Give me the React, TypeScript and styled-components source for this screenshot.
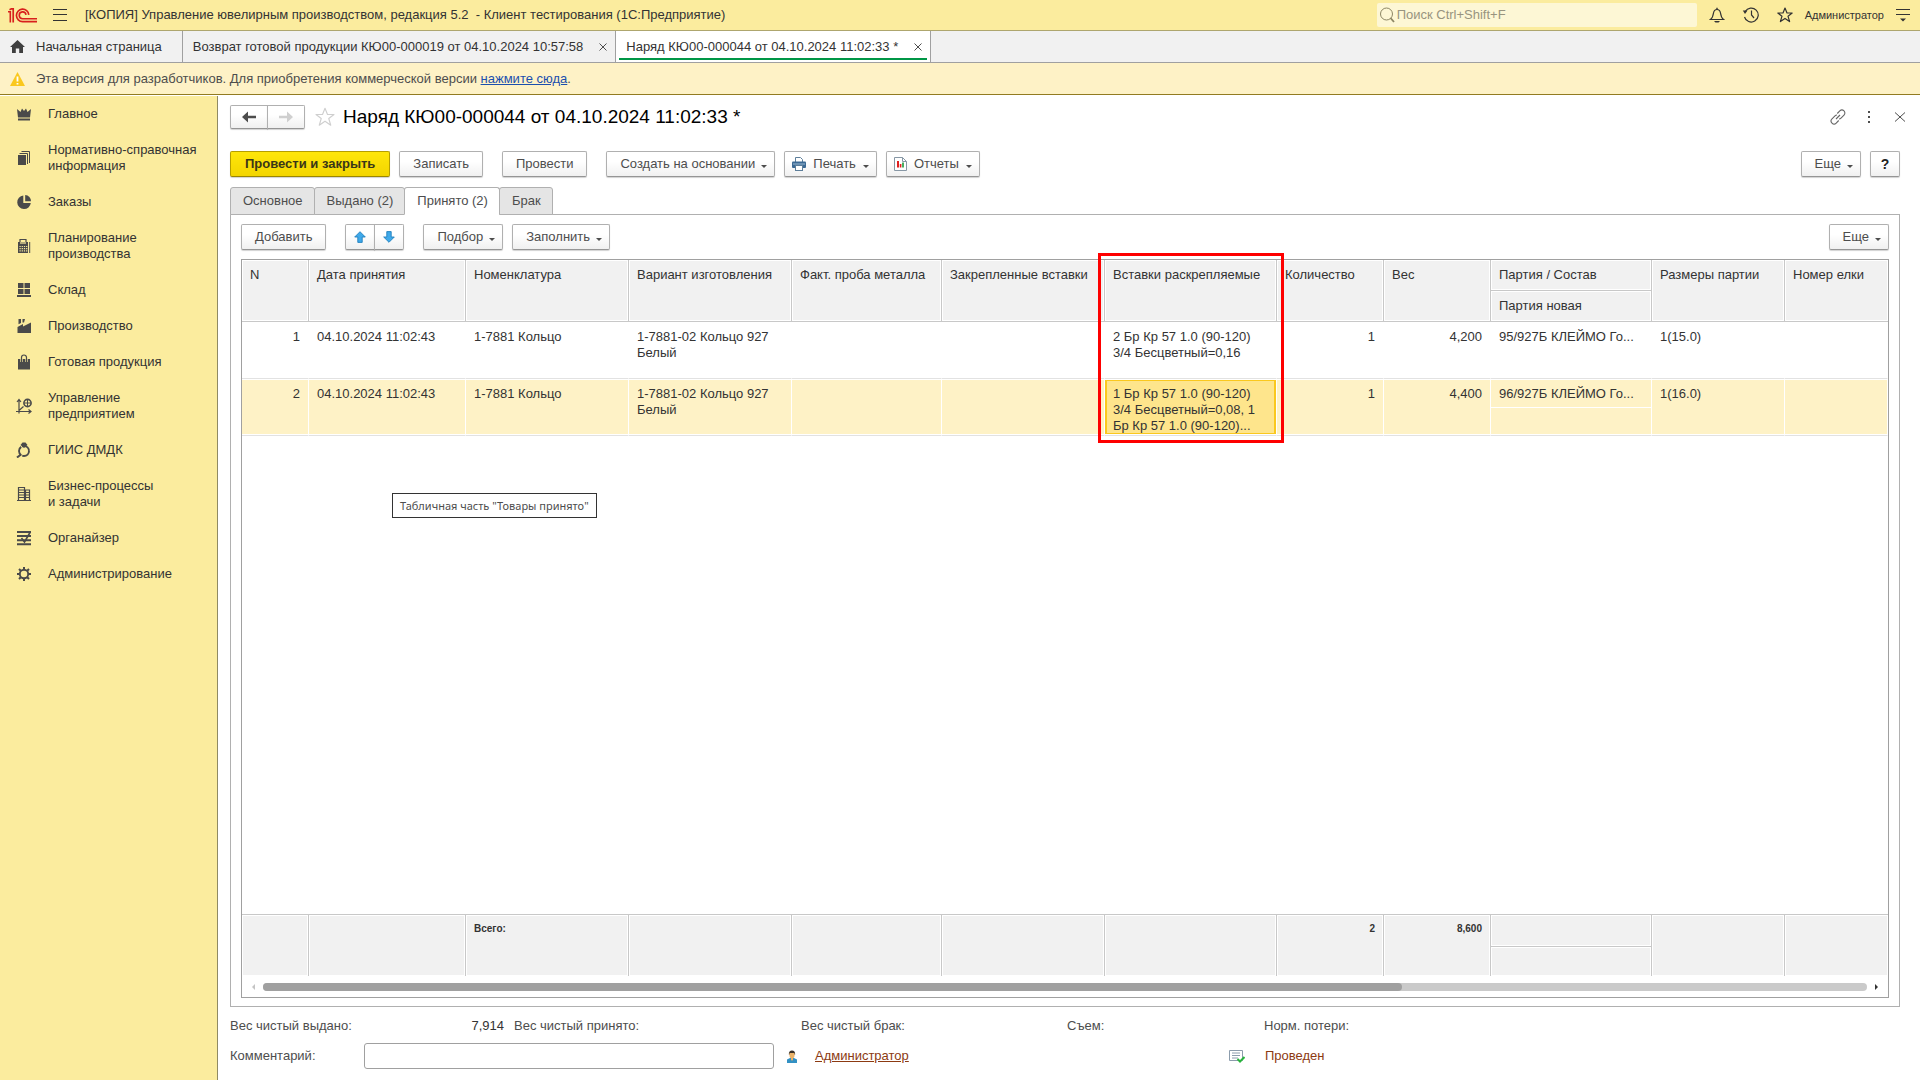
import React from "react";
import styled, { createGlobalStyle, css } from "styled-components";

const Global = createGlobalStyle`
  *, *::before, *::after { box-sizing: border-box; }
  html, body { margin: 0; padding: 0; }
  body, button, input, table {
    font-family: "Liberation Sans", Arial, sans-serif;
    font-size: 13px;
    line-height: 16px;
    color: #333;
  }
  button { padding: 0; margin: 0; border: 0; background: none; cursor: pointer; }
  a { color: inherit; text-decoration: none; }
  svg { display: block; flex: none; }
`;

const Shell = styled.div`
  display: flex;
  flex-direction: column;
  height: 100vh;
  min-height: 640px;
  background: #fff;
`;

/* ---------- top bar ---------- */
const TopBar = styled.header`
  display: flex;
  align-items: center;
  height: 31px;
  flex: none;
  padding: 0 10px 0 8px;
  background: #fbec9e;
  border-bottom: 1px solid #aea66e;
`;
const MenuButton = styled.button`
  margin: 0 18px 0 16px;
`;
const AppTitle = styled.div`
  flex: 1;
  white-space: pre;
`;
const Search = styled.label`
  display: flex;
  align-items: center;
  gap: 2px;
  width: 320px;
  height: 24px;
  padding: 0 2px;
  margin-right: 12px;
  border-radius: 2px;
  background: #fdf7d5;
`;
const SearchInput = styled.input`
  flex: 1;
  min-width: 0;
  padding: 0;
  border: 0;
  outline: 0;
  background: transparent;
  &::placeholder { color: #98947f; opacity: 1; }
`;
const TopIcons = styled.div`
  display: flex;
  align-items: center;
  gap: 17px;
`;
const UserName = styled.button`
  margin: 0 12px;
  font-size: 11px;
`;

/* ---------- window tabs ---------- */
const WindowTabs = styled.nav`
  display: flex;
  height: 32px;
  flex: none;
  background: #f1f1f1;
  border-bottom: 1px solid #a0a0a0;
`;
const WindowTab = styled.div<{ $active?: boolean }>`
  display: flex;
  align-items: center;
  gap: 16px;
  padding: 0 8px 0 10px;
  border-right: 1px solid #a0a0a0;
  background: ${(p) => (p.$active ? "#fff" : "transparent")};
  ${(p) =>
    p.$active &&
    css`
      background: linear-gradient(#009646, #009646) 50% 27px / calc(100% - 6px) 2px no-repeat #fff;
    `}
`;
const HomeTab = styled(WindowTab)`
  gap: 11px;
  padding: 0 20px 0 10px;
`;

/* ---------- notice ---------- */
const Notice = styled.div`
  display: flex;
  align-items: center;
  gap: 11px;
  height: 32px;
  flex: none;
  padding: 0 10px;
  margin-bottom: 1px;
  color: #4d4d4d;
  background: #fef2c6;
  border-bottom: 1px solid #927b21;
`;
const NoticeLink = styled.a`
  color: #1b4fae;
  text-decoration: underline;
`;

/* ---------- body ---------- */
const Body = styled.div`
  display: flex;
  flex: 1;
  min-height: 0;
`;
const Sidebar = styled.nav`
  width: 218px;
  flex: none;
  background: #fbec9e;
  border-right: 1px solid #8f8a63;
`;
const SideItem = styled.a`
  display: flex;
  align-items: center;
  gap: 15px;
  padding: 10px 8px 10px 15px;
  white-space: pre-line;
`;
const Main = styled.main`
  display: flex;
  flex-direction: column;
  flex: 1;
  min-width: 0;
  padding: 9px 20px 11px 12px;
`;
const TitleRow = styled.div`
  display: flex;
  align-items: center;
  height: 24px;
`;
const Title = styled.h1`
  flex: 1;
  margin: 0 0 0 8px;
  font-size: 19px;
  line-height: 24px;
  font-weight: 400;
  color: #000;
`;
const WindowIcons = styled.div`
  display: flex;
  align-items: center;
  gap: 16px;
  margin-right: -8px;
`;

const Button = styled.button<{ $primary?: boolean; $menu?: boolean }>`
  display: inline-flex;
  align-items: center;
  justify-content: center;
  gap: 6px;
  height: 26px;
  padding: 0 ${(p) => (p.$menu ? "7px" : "13px")} 0 13px;
  color: #4d4d4d;
  white-space: nowrap;
  border: 1px solid #b0b0b0;
  border-bottom-color: #959595;
  border-radius: 2px;
  background: linear-gradient(#fff 40%, #f0f0f0);
  box-shadow: 0 1px 1px rgba(0, 0, 0, 0.18);
  ${(p) =>
    p.$primary &&
    css`
      padding: 0 14px;
      color: #3a3618;
      font-weight: 700;
      background: linear-gradient(#ffe60a, #f3d500);
      border-color: #b59e00;
      border-bottom-color: #9a8600;
    `}
`;
const IconMenuButton = styled(Button)`
  gap: 7px;
  padding-left: 7px;
`;
const SquareButton = styled(Button)`
  width: 30px;
  padding: 0;
  font-size: 14px;
  font-weight: 700;
  color: #222;
`;
const Pair = styled.div`
  display: flex;
`;
const PairButton = styled(Button)<{ $wide?: boolean }>`
  width: ${(p) => (p.$wide ? "38px" : "30px")};
  height: ${(p) => (p.$wide ? "24px" : "26px")};
  padding: 0;
  &:first-child { border-radius: 2px 0 0 2px; }
  &:last-child { border-radius: 0 2px 2px 0; margin-left: -1px; }
`;
const NavPair = styled(Pair)`
  margin-right: 10px;
`;
const CommandBar = styled.div`
  display: flex;
  gap: 9px;
  margin: 22px 0 10px;
`;
const Gap = styled.span`
  width: 1px;
`;
const Spacer = styled.span`
  flex: 1;
`;

/* ---------- page tabs ---------- */
const PageTabs = styled.div`
  display: flex;
  height: 28px;
  margin-bottom: -1px;
`;
const PageTab = styled.button<{ $active?: boolean }>`
  position: relative;
  padding: 0 11px 0 12px;
  border: 1px solid #b0b0b0;
  border-radius: 3px 3px 0 0;
  color: #4d4d4d;
  background: #e5e5e5;
  & + & { margin-left: -1px; }
  ${(p) =>
    p.$active &&
    css`
      background: #fff;
      border-bottom-color: #fff;
    `}
`;
const Panel = styled.section`
  display: flex;
  flex-direction: column;
  flex: 1;
  min-height: 0;
  padding: 9px 10px 8px;
  border: 1px solid #b0b0b0;
`;
const TableBar = styled.div`
  display: flex;
  gap: 9px;
  margin-bottom: 9px;
`;

/* ---------- data table ---------- */
const TableFrame = styled.div`
  position: relative;
  display: flex;
  flex-direction: column;
  flex: 1;
  min-height: 0;
  border: 1px solid #a0a0a0;
`;
const TableArea = styled.div`
  flex: 1;
  min-height: 0;
`;
const Table = styled.table`
  width: 100%;
  height: 100%;
  table-layout: fixed;
  border-collapse: separate;
  border-spacing: 0;
`;
const HeadCell = styled.th`
  position: relative;
  height: 31px;
  padding: 7px 8px;
  text-align: left;
  vertical-align: top;
  font-weight: 400;
  white-space: nowrap;
  background: #f1f1f1;
  border-right: 1px solid #c8c8c8;
  border-bottom: 1px solid #c8c8c8;
  box-shadow: inset 0 0 0 1px #fff;
  &.last { border-right: 0; }
`;
const Frame = styled.span`
  position: absolute;
  z-index: 2;
  top: -7px;
  left: -7px;
  width: calc(100% + 15px);
  height: 190px;
  border: 3px solid #fe0000;
  pointer-events: none;
`;
const Row = styled.tr<{ $selected?: boolean }>`
  height: 57px;
  background: ${(p) => (p.$selected ? "#fef2c6" : "#fff")};
`;
const Cell = styled.td<{ $right?: boolean; $current?: boolean; $split?: boolean }>`
  padding: 7px 8px 0;
  vertical-align: top;
  text-align: ${(p) => (p.$right ? "right" : "left")};
  border-right: 1px solid #fff;
  border-bottom: 1px solid #e2e2e2;
  box-shadow: inset 0 1px 0 #fff, inset 0 -1px 0 #fff;
  overflow: hidden;
  ${(p) =>
    p.$split &&
    css`
      background: linear-gradient(#fff, #fff) 0 28px / 100% 1px no-repeat;
      white-space: nowrap;
    `}
  ${(p) =>
    p.$current &&
    css`
      background: #fee58c;
      box-shadow: inset 0 1px 0 #fff, inset 0 -1px 0 #fff, inset 0 0 0 2px #fac81e;
    `}
`;
const Filler = styled.td`
  padding: 0;
`;
const FootCell = styled.td<{ $right?: boolean; $first?: boolean }>`
  height: ${(p) => (p.$first ? "32px" : "30px")};
  padding: 7px 8px 0;
  vertical-align: top;
  font-size: 10px;
  line-height: 14px;
  font-weight: 700;
  text-align: ${(p) => (p.$right ? "right" : "left")};
  background: #f1f1f1;
  border-right: 1px solid #c8c8c8;
  border-top: 1px solid #c8c8c8;
  box-shadow: inset 0 0 0 1px #fff;
  &.last { border-right: 0; }
`;
const ScrollRow = styled.div`
  display: flex;
  align-items: center;
  gap: 7px;
  height: 21px;
  padding: 0 9px;
`;
const Track = styled.div`
  flex: 1;
  height: 8px;
  border-radius: 4px;
  background: #cacaca;
`;
const Thumb = styled.div`
  width: 71%;
  height: 8px;
  border-radius: 4px;
  background: #a0a0a0;
`;
const Tip = styled.div`
  position: absolute;
  top: 233px;
  left: 150px;
  padding: 3px 7px;
  border: 1px solid #333;
  background: #fff;
  color: #4d4d4d;
  font-family: "Noto Sans", "Open Sans", sans-serif;
  font-size: 11px;
  line-height: 17px;
`;

/* ---------- footer form ---------- */
const Totals = styled.dl`
  display: grid;
  grid-template-columns: 284px 287px 266px 197px 1fr;
  margin: 11px 0 0;
  color: #4d4d4d;
`;
const Total = styled.div`
  display: flex;
  justify-content: space-between;
  padding-right: 10px;
`;
const TotalValue = styled.dd`
  margin: 0;
  color: #333;
`;
const CommentRow = styled.div`
  display: grid;
  grid-template-columns: 134px 410px 41px 414px 36px 1fr;
  align-items: center;
  margin-top: 9px;
  color: #4d4d4d;
`;
const CommentInput = styled.input`
  height: 26px;
  padding: 0 6px;
  border: 1px solid #a0a0a0;
  border-radius: 3px;
`;
const IconSlot = styled.span`
  display: flex;
  justify-content: center;
  padding-right: 6px;
`;
const DocSlot = styled.span`
  display: flex;
`;
const AuthorLink = styled.a`
  color: #8c3a12;
  text-decoration: underline;
`;
const Posted = styled.span`
  color: #8c3a12;
`;

/* ---------- icons ---------- */
const CaretSvg = styled.svg`
  margin-top: 4px;
`;
const Caret = () => (
  <CaretSvg width="6" height="3" viewBox="0 0 6 3">
    <path d="M0 0h6L3 3z" fill="#4d4d4d" />
  </CaretSvg>
);
const Cross = () => (
  <svg width="8" height="8" viewBox="0 0 8 8">
    <path d="M.5.5l7 7M7.5.5l-7 7" stroke="#4d4d4d" fill="none" />
  </svg>
);
const Logo = () => (
  <svg width="29" height="15" viewBox="0 0 29 15" fill="none" stroke="#d8201c">
    <path d="M0 3.700h2.300V14.500" strokeWidth="1.600" />
    <path d="M1.500 1.800L3.500.8h1.700V14.500" strokeWidth="1.700" />
    <path d="M20.800 6.800A6.200 6.200 0 1 0 14.600 13.600H29" strokeWidth="1.700" />
    <path d="M18 6.800A3.400 3.400 0 1 0 14.600 10.700H29" strokeWidth="1.600" />
  </svg>
);
const Arrow = ({ color, flip }: { color: string; flip?: boolean }) => (
  <svg width="14" height="12" viewBox="0 0 14 12">
    <g transform={flip ? "translate(14 0) scale(-1 1)" : undefined}>
      <path d="M6 .5L0 6l6 5.500V7.300h8V4.700H6z" fill={color} />
    </g>
  </svg>
);
const Move = ({ down }: { down?: boolean }) => (
  <svg width="12" height="12" viewBox="0 0 12 12">
    <g transform={down ? "rotate(180 6 6)" : undefined}>
      <path d="M6 .7L11.3 6H8.2v5.4H3.8V6H.7z" fill="#3fa9ea" stroke="#2080bd" strokeWidth=".9" />
    </g>
  </svg>
);
const Star = ({ size, stroke, w = 1.2 }: { size: number; stroke: string; w?: number }) => (
  <svg width={size} height={size} viewBox="0 0 16 16">
    <path
      d="M8 1l2 5h5.2L11 9.2l1.600 5.400L8 11.400l-4.600 3.200L5 9.200.8 6H6z"
      fill="none"
      stroke={stroke}
      strokeWidth={w}
      strokeLinejoin="round"
    />
  </svg>
);
const Printer = () => (
  <svg width="14" height="14" viewBox="0 0 14 14">
    <path d="M3.500 5V.5h5l2 2V5" fill="#fff" stroke="#5d7e9a" />
    <rect y="4.500" width="14" height="6.500" rx="1" fill="#3c6a94" />
    <path d="M1 7h12" stroke="#9dbbd4" />
    <rect x="3.500" y="8.500" width="7" height="5" fill="#fff" stroke="#5d7e9a" />
  </svg>
);
const Report = () => (
  <svg width="13" height="14" viewBox="0 0 13 14">
    <path d="M.5.5h8l4 4v9H.5z" fill="#fff" stroke="#8797a5" />
    <path d="M8.500.5v4h4" fill="none" stroke="#8797a5" />
    <path d="M4 4v6.500" stroke="#e02020" strokeWidth="2" />
    <path d="M6.600 7v3.500" stroke="#e02020" strokeWidth="1.600" />
    <path d="M9 5.500v5" stroke="#1c9a3a" strokeWidth="1.600" />
  </svg>
);

const D = "#4a4a4a";
const Y = "#fbec9e";
const sideIcons: Record<string, React.ReactNode> = {
  crown: (
    <>
      <path d="M1 3l3.500 3L6 2.500l2 2.500 2-2.500L11.500 6 15 3l-1 8.500H2z" fill={D} />
      <path d="M2 12.500h12v2H2z" fill={D} />
    </>
  ),
  books: (
    <>
      <path d="M2 5h8v10H2z" fill={D} />
      <path d="M3.500 3.500h8V14M5.500 1.500h8V13" fill="none" stroke={D} />
    </>
  ),
  pie: (
    <>
      <path d="M7.300 1.500A6.800 6.800 0 1 0 14.800 9H7.300z" fill={D} />
      <path d="M9.200 1a6 6 0 0 1 5.800 6.300H9.200z" fill={D} />
    </>
  ),
  calc: (
    <>
      <path d="M4 5V1.500h6V5" fill="none" stroke={D} strokeWidth="1.200" />
      <path d="M2 4h10v11H2z" fill={D} />
      <path d="M4 5h6" stroke={Y} strokeWidth="1.200" />
      <path d="M3.500 8.500h8M3.500 10.700h8M3.500 12.900h8" stroke={Y} strokeWidth="1.200" strokeDasharray="1.200 1" />
      <path d="M13.700 4v11" stroke={D} />
    </>
  ),
  stock: (
    <path d="M2 1h5.500v5H2zM8.500 1H14v5H8.500zM2 7h5.500v5H2zM8.500 7H14v5H8.500zM1 13h14v2H1z" fill={D} />
  ),
  factory: <path d="M1.500 15V9L7 6v2.500L15 4.500V15zM2.500 1H5v4L2.500 6.300zM6.500 1H9l-1 3.500H6.500z" fill={D} />,
  bag: (
    <>
      <path d="M2 5h12v10.500H2z" fill={D} />
      <path d="M5.500 8V3.500a2.500 2.500 0 0 1 5 0V8" fill="none" stroke={Y} strokeWidth="2.400" />
      <path d="M5.500 8V3.500a2.500 2.500 0 0 1 5 0V8" fill="none" stroke={D} strokeWidth="1.200" />
    </>
  ),
  graph: (
    <>
      <path d="M3 15.500V2M1 4l2-2.500L5 4M0 13.500h14M12.500 11.500l2.500 2-2.500 2M3 12.500l4.500-4" fill="none" stroke={D} strokeWidth="1.200" />
      <circle cx="11.500" cy="5" r="3.600" fill="none" stroke={D} strokeWidth="1.600" />
      <path d="M11.500 2v6M8 5h7" stroke={D} />
    </>
  ),
  ring: (
    <>
      <path d="M4.500 3L6.500.5h3L11.500 3 8 6z" fill={D} />
      <circle cx="8" cy="9" r="5" fill="none" stroke={D} strokeWidth="1.900" strokeDasharray="9.500 1" />
      <path d="M5 12.500L1 15.500" stroke={D} strokeWidth="2" />
    </>
  ),
  building: (
    <>
      <path d="M2.500 1.500h6v13h-6zM9.500 4h4v10.500h-4z" fill="none" stroke={D} strokeWidth="1.200" />
      <path d="M2 4h7M2 6.500h12M2 9h12M2 11.500h12M1 14.500h14" stroke={D} strokeWidth="1.200" />
    </>
  ),
  organizer: (
    <>
      <path d="M1 2h14M1 6h14M1 10.200h14M1 14.300h14" stroke={D} strokeWidth="1.900" />
      <path d="M14 2.500L8.500 12 5.500 8" fill="none" stroke={D} strokeWidth="1.600" />
    </>
  ),
  gear: (
    <>
      <circle cx="8" cy="8" r="4.200" fill="none" stroke={D} strokeWidth="1.900" />
      <path
        d="M8 1v2.500M8 12.500V15M1 8h2.500M12.500 8H15M3 3l1.800 1.800M11.200 11.200L13 13M13 3l-1.800 1.800M4.800 11.200L3 13"
        stroke={D}
        strokeWidth="2"
      />
    </>
  ),
};

const sections: [string, string][] = [
  ["crown", "Главное"],
  ["books", "Нормативно-справочная\nинформация"],
  ["pie", "Заказы"],
  ["calc", "Планирование\nпроизводства"],
  ["stock", "Склад"],
  ["factory", "Производство"],
  ["bag", "Готовая продукция"],
  ["graph", "Управление\nпредприятием"],
  ["ring", "ГИИС ДМДК"],
  ["building", "Бизнес-процессы\nи задачи"],
  ["organizer", "Органайзер"],
  ["gear", "Администрирование"],
];

const columns = [67, 157, 163, 163, 150, 163, 172, 107, 107, 161, 133, 0];

const rows = [
  {
    n: 1,
    date: "04.10.2024 11:02:43",
    item: "1-7881 Кольцо",
    variant: "1-7881-02 Кольцо 927 Белый",
    loose: "2 Бр Кр 57 1.0 (90-120) 3/4 Бесцветный=0,16",
    qty: "1",
    weight: "4,200",
    batch: "95/927Б КЛЕЙМО Го...",
    size: "1(15.0)",
  },
  {
    n: 2,
    date: "04.10.2024 11:02:43",
    item: "1-7881 Кольцо",
    variant: "1-7881-02 Кольцо 927 Белый",
    loose: "1 Бр Кр 57 1.0 (90-120) 3/4 Бесцветный=0,08, 1 Бр Кр 57 1.0 (90-120)...",
    qty: "1",
    weight: "4,400",
    batch: "96/927Б КЛЕЙМО Го...",
    size: "1(16.0)",
  },
];

export default function App() {
  return (
    <Shell>
      <Global />
      <TopBar>
        <Logo />
        <MenuButton aria-label="Меню">
          <svg width="14" height="12" viewBox="0 0 14 12">
            <path d="M0 .5h14M0 5.500h14M0 11.500h14" stroke="#333" />
          </svg>
        </MenuButton>
        <AppTitle>{"[КОПИЯ] Управление ювелирным производством, редакция 5.2  - Клиент тестирования (1С:Предприятие)"}</AppTitle>
        <Search>
          <svg width="16" height="16" viewBox="0 0 16 16">
            <circle cx="7.500" cy="7" r="6" fill="none" stroke="#8c8664" />
            <path d="M11.500 11l3.500 4" stroke="#8c8664" strokeWidth="1.800" />
          </svg>
          <SearchInput aria-label="Поиск" placeholder="Поиск Ctrl+Shift+F" />
        </Search>
        <TopIcons>
          <button aria-label="Уведомления">
            <svg width="16" height="16" viewBox="0 0 16 16">
              <path d="M1.500 12.500c2-1.500 2.500-3 3-6.500.4-2.300 1.500-3.500 3.500-3.500s3.100 1.200 3.500 3.500c.5 3.500 1 5 3 6.500z" fill="none" stroke="#333" strokeWidth="1.200" />
              <path d="M5 14h6l-1.500 1.500h-3zM7.300.8h1.400v2H7.300z" fill="#333" />
            </svg>
          </button>
          <button aria-label="История">
            <svg width="18" height="16" viewBox="0 0 18 16">
              <path d="M3.200 4.500A7 7 0 1 1 2.500 10" fill="none" stroke="#333" strokeWidth="1.200" />
              <path d="M.8 3.500h4.700L3 7z" fill="#333" />
              <path d="M9.500 3.500V8l2.500 3" fill="none" stroke="#333" strokeWidth="1.200" />
            </svg>
          </button>
          <button aria-label="Избранное">
            <Star size={16} stroke="#333" />
          </button>
        </TopIcons>
        <UserName>Администратор</UserName>
        <button aria-label="Настройки">
          <svg width="14" height="14" viewBox="0 0 14 14">
            <path d="M0 1.500h14M0 6.500h14" stroke="#333" />
            <path d="M4 10.500h6l-3 3z" fill="#333" />
          </svg>
        </button>
      </TopBar>

      <WindowTabs>
        <HomeTab>
          <svg width="15" height="13" viewBox="0 0 15 13">
            <path d="M7.500 0L15 7h-2v6H9.200V8.500H5.800V13H2V7H0z" fill="#3f3f3f" />
          </svg>
          <button>Начальная страница</button>
        </HomeTab>
        <WindowTab>
          <button>Возврат готовой продукции КЮ00-000019 от 04.10.2024 10:57:58</button>
          <button aria-label="Закрыть">
            <Cross />
          </button>
        </WindowTab>
        <WindowTab $active>
          <button>Наряд КЮ00-000044 от 04.10.2024 11:02:33 *</button>
          <button aria-label="Закрыть">
            <Cross />
          </button>
        </WindowTab>
      </WindowTabs>

      <Notice>
        <svg width="15" height="14" viewBox="0 0 15 14">
          <path d="M7.500 0L15 14H0z" fill="#fac81e" />
          <path d="M7.500 4.500v5M7.500 11v1.600" stroke="#fff" strokeWidth="1.800" />
        </svg>
        <span>
          Эта версия для разработчиков. Для приобретения коммерческой версии <NoticeLink href="#">нажмите сюда</NoticeLink>.
        </span>
      </Notice>

      <Body>
        <Sidebar>
          {sections.map(([icon, label]) => (
            <SideItem key={icon} href="#">
              <svg width="18" height="16" viewBox="0 0 16 16">
                {sideIcons[icon]}
              </svg>
              <span>{label}</span>
            </SideItem>
          ))}
        </Sidebar>

        <Main>
          <TitleRow>
            <NavPair>
              <PairButton $wide aria-label="Назад">
                <Arrow color="#4d4d4d" />
              </PairButton>
              <PairButton $wide aria-label="Вперед">
                <Arrow color="#cfcfcf" flip />
              </PairButton>
            </NavPair>
            <Star size={20} stroke="#cfcfcf" w={0.9} />
            <Title>Наряд КЮ00-000044 от 04.10.2024 11:02:33 *</Title>
            <WindowIcons>
              <button aria-label="Ссылка">
                <svg width="16" height="16" viewBox="0 0 16 16" fill="none" stroke="#666" strokeWidth="1.100">
                  <path d="M7.300 4.500l2.500-2.600a2.900 2.900 0 0 1 4.200 4.200L11 9.200a2.700 2.700 0 0 1-2 .8" />
                  <path d="M8.700 11.500l-2.500 2.600A2.900 2.900 0 0 1 2 9.900l3-3.100A2.700 2.700 0 0 1 7 6M6 10l4-4" />
                </svg>
              </button>
              <button aria-label="Действия">
                <svg width="14" height="12" viewBox="0 0 14 12">
                  <path d="M6 0h2v2H6zM6 5h2v2H6zM6 10h2v2H6z" fill="#4d4d4d" />
                </svg>
              </button>
              <button aria-label="Закрыть">
                <svg width="16" height="10" viewBox="0 0 16 10">
                  <path d="M3 .5l10 9M13 .5l-10 9" stroke="#4d4d4d" />
                </svg>
              </button>
            </WindowIcons>
          </TitleRow>

          <CommandBar>
            <Button $primary>Провести и закрыть</Button>
            <Button>Записать</Button>
            <Gap />
            <Button>Провести</Button>
            <Gap />
            <Button $menu>Создать на основании <Caret /></Button>
            <IconMenuButton $menu>
              <Printer /> Печать <Caret />
            </IconMenuButton>
            <IconMenuButton $menu>
              <Report /> Отчеты <Caret />
            </IconMenuButton>
            <Spacer />
            <Button $menu>Еще <Caret /></Button>
            <SquareButton>?</SquareButton>
          </CommandBar>

          <PageTabs role="tablist">
            <PageTab role="tab">Основное</PageTab>
            <PageTab role="tab">Выдано (2)</PageTab>
            <PageTab role="tab" $active aria-selected>Принято (2)</PageTab>
            <PageTab role="tab">Брак</PageTab>
          </PageTabs>

          <Panel>
            <TableBar>
              <Button>Добавить</Button>
              <Gap />
              <Pair>
                <PairButton aria-label="Вверх">
                  <Move />
                </PairButton>
                <PairButton aria-label="Вниз">
                  <Move down />
                </PairButton>
              </Pair>
              <Gap />
              <Button $menu>Подбор <Caret /></Button>
              <Button $menu>Заполнить <Caret /></Button>
              <Spacer />
              <Button $menu>Еще <Caret /></Button>
            </TableBar>

            <TableFrame>
              <TableArea>
                <Table>
                  <colgroup>
                    {columns.map((w, i) => (
                      <col key={i} style={w ? { width: w } : undefined} />
                    ))}
                  </colgroup>
                  <thead>
                    <tr>
                      <HeadCell rowSpan={2}>N</HeadCell>
                      <HeadCell rowSpan={2}>Дата принятия</HeadCell>
                      <HeadCell rowSpan={2}>Номенклатура</HeadCell>
                      <HeadCell rowSpan={2}>Вариант изготовления</HeadCell>
                      <HeadCell rowSpan={2}>Факт. проба металла</HeadCell>
                      <HeadCell rowSpan={2}>Закрепленные вставки</HeadCell>
                      <HeadCell rowSpan={2}>
                        Вставки раскрепляемые
                        <Frame />
                      </HeadCell>
                      <HeadCell rowSpan={2}>Количество</HeadCell>
                      <HeadCell rowSpan={2}>Вес</HeadCell>
                      <HeadCell>Партия / Состав</HeadCell>
                      <HeadCell rowSpan={2}>Размеры партии</HeadCell>
                      <HeadCell rowSpan={2} className="last">Номер елки</HeadCell>
                    </tr>
                    <tr>
                      <HeadCell>Партия новая</HeadCell>
                    </tr>
                  </thead>
                  <tbody>
                    {rows.map((r) => (
                      <Row key={r.n} $selected={r.n === 2}>
                        <Cell $right>{r.n}</Cell>
                        <Cell>{r.date}</Cell>
                        <Cell>{r.item}</Cell>
                        <Cell>{r.variant}</Cell>
                        <Cell />
                        <Cell />
                        <Cell $current={r.n === 2}>{r.loose}</Cell>
                        <Cell $right>{r.qty}</Cell>
                        <Cell $right>{r.weight}</Cell>
                        <Cell $split>{r.batch}</Cell>
                        <Cell>{r.size}</Cell>
                        <Cell />
                      </Row>
                    ))}
                    <tr>
                      <Filler colSpan={12} />
                    </tr>
                  </tbody>
                  <tfoot>
                    <tr>
                      <FootCell $first rowSpan={2} />
                      <FootCell rowSpan={2} />
                      <FootCell rowSpan={2}>Всего:</FootCell>
                      <FootCell rowSpan={2} />
                      <FootCell rowSpan={2} />
                      <FootCell rowSpan={2} />
                      <FootCell rowSpan={2} />
                      <FootCell rowSpan={2} $right>2</FootCell>
                      <FootCell rowSpan={2} $right>8,600</FootCell>
                      <FootCell $first />
                      <FootCell rowSpan={2} />
                      <FootCell rowSpan={2} className="last" />
                    </tr>
                    <tr>
                      <FootCell />
                    </tr>
                  </tfoot>
                </Table>
              </TableArea>
              <ScrollRow>
                <svg width="5" height="6" viewBox="0 0 5 6">
                  <path d="M4 0v6L1 3z" fill="#c4c4c4" />
                </svg>
                <Track>
                  <Thumb />
                </Track>
                <svg width="5" height="6" viewBox="0 0 5 6">
                  <path d="M1 0v6l3-3z" fill="#333" />
                </svg>
              </ScrollRow>
              <Tip role="tooltip">Табличная часть "Товары принято"</Tip>
            </TableFrame>
          </Panel>

          <Totals>
            <Total>
              <dt>Вес чистый выдано:</dt>
              <TotalValue>7,914</TotalValue>
            </Total>
            <Total><dt>Вес чистый принято:</dt></Total>
            <Total><dt>Вес чистый брак:</dt></Total>
            <Total><dt>Съем:</dt></Total>
            <Total><dt>Норм. потери:</dt></Total>
          </Totals>
          <CommentRow>
            <label htmlFor="comment">Комментарий:</label>
            <CommentInput id="comment" />
            <IconSlot>
              <svg width="10" height="13" viewBox="0 0 10 13">
                <path d="M0 13V9.500L3 8h4l3 1.500V13z" fill="#3391c4" />
                <path d="M4 8h2v1.500L5 11 4 9.500z" fill="#eab268" />
                <path d="M1.800 4.500a3.200 4 0 0 1 6.400 0z" fill="#3a3027" />
                <path d="M2.500 3h5v2.500a2.500 3 0 0 1-5 0z" fill="#eab268" />
              </svg>
            </IconSlot>
            <AuthorLink href="#">Администратор</AuthorLink>
            <DocSlot>
              <svg width="16" height="13" viewBox="0 0 16 13">
                <path d="M.5.5h13v10H.5z" fill="#fff" stroke="#8c9cac" />
                <path d="M3 3h8M3 5.500h8M3 8h6" stroke="#8c9cac" />
                <path d="M8.500 9l2.500 2.500L15.500 7" fill="none" stroke="#28b43c" strokeWidth="2" />
              </svg>
            </DocSlot>
            <Posted>Проведен</Posted>
          </CommentRow>
        </Main>
      </Body>
    </Shell>
  );
}
